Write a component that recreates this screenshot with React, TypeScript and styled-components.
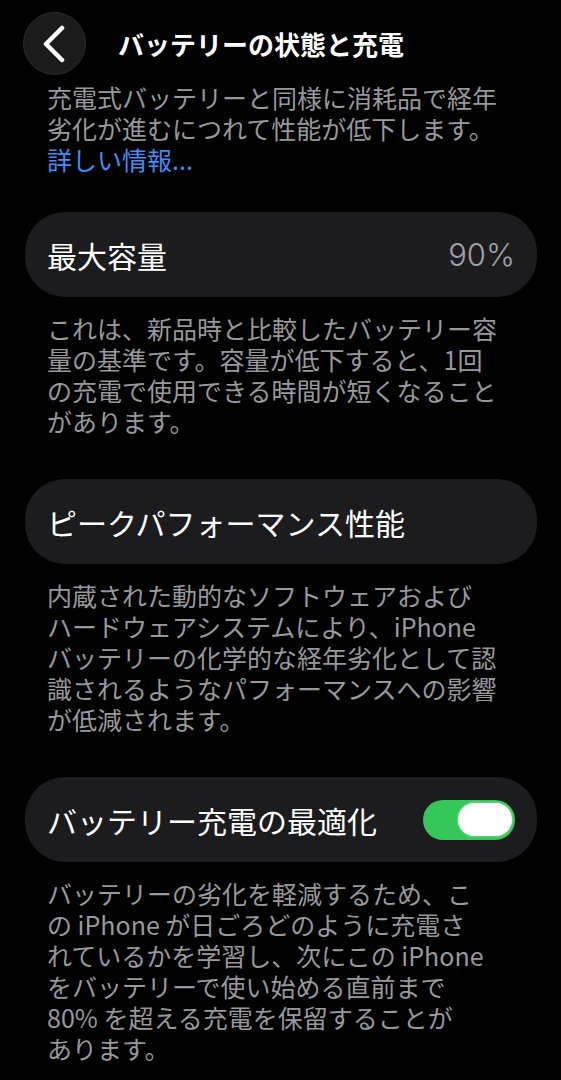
import React from 'react'
import styled, { createGlobalStyle } from 'styled-components'

const GlobalStyle = createGlobalStyle`
  html, body {
    margin: 0;
    padding: 0;
    background: #000;
  }
  body {
    font-family: "Noto Sans CJK JP", "Noto Sans", sans-serif;
    -webkit-font-smoothing: antialiased;
  }
`

const Page = styled.div`
  width: 561px;
  min-height: 1080px;
  background: #000;
  padding: 12px 24px 0 25px;
  box-sizing: border-box;
  overflow: hidden;
`

const Header = styled.header`
  display: flex;
  align-items: center;
  height: 63px;
  margin-left: -2px;
`

const BackButton = styled.button`
  width: 63px;
  height: 63px;
  border-radius: 50%;
  background: #1b1b1c;
  border: 1px solid #2a2a2c;
  box-sizing: border-box;
  display: flex;
  align-items: center;
  justify-content: center;
  padding: 0;
  flex-shrink: 0;
  svg {
    display: block;
    margin-left: -2px;
  }
`

const Title = styled.h1`
  margin: 0 0 0 32px;
  font-size: 26px;
  font-weight: 700;
  color: #fff;
  line-height: 1;
  letter-spacing: 0;
`

const Note = styled.p<{ $top: number }>`
  margin: ${(p) => p.$top}px 0 0 22px;
  font-size: 25px;
  line-height: 31px;
  color: #98989d;
  white-space: nowrap;
  span {
    display: block;
    height: 31px;
  }
`

const Link = styled.span`
  color: #3f8ef5;
`

const Card = styled.div<{ $top: number }>`
  margin-top: ${(p) => p.$top}px;
  height: 85px;
  border-radius: 40px;
  background: #1c1c1e;
  display: flex;
  align-items: center;
  justify-content: space-between;
  padding: 0 22px;
  box-sizing: border-box;
`

const Label = styled.span`
  font-size: 30px;
  color: #fff;
  line-height: 1;
`

const Value = styled.span`
  font-family: Inter, "Liberation Sans", sans-serif;
  font-size: 31px;
  font-weight: 300;
  color: #a0a0a5;
  line-height: 1;
`

const Toggle = styled.div<{ $on: boolean }>`
  width: 92px;
  height: 40px;
  border-radius: 20px;
  background: ${(p) => (p.$on ? '#34c759' : '#39393d')};
  display: flex;
  align-items: center;
  justify-content: ${(p) => (p.$on ? 'flex-end' : 'flex-start')};
  padding: 0 3px;
  box-sizing: border-box;
`

const Knob = styled.div`
  width: 54px;
  height: 33px;
  border-radius: 17px;
  background: #fff;
  box-shadow: 0 0 3px rgba(255, 255, 255, 0.6);
`

const Lines = ({ lines }: { lines: string[] }) => (
  <>
    {lines.map((l, i) => (
      <span key={i}>{l}</span>
    ))}
  </>
)

const capacityNote = [
  'これは、新品時と比較したバッテリー容',
  '量の基準です。容量が低下すると、1回',
  'の充電で使用できる時間が短くなること',
  'があります。',
]

const peakNote = [
  '内蔵された動的なソフトウェアおよび',
  'ハードウェアシステムにより、iPhone',
  'バッテリーの化学的な経年劣化として認',
  '識されるようなパフォーマンスへの影響',
  'が低減されます。',
]

const optimizeNote = [
  'バッテリーの劣化を軽減するため、こ',
  'の iPhone が日ごろどのように充電さ',
  'れているかを学習し、次にこの iPhone',
  'をバッテリーで使い始める直前まで',
  '80% を超える充電を保留することが',
  'あります。',
]

export default function App() {
  return (
    <>
      <GlobalStyle />
      <Page>
        <Header>
          <BackButton aria-label="戻る">
            <svg width="24" height="38" viewBox="0 0 24 38">
              <polyline
                points="20,3 4,19 20,35"
                fill="none"
                stroke="#fff"
                strokeWidth="4.5"
                strokeLinecap="round"
                strokeLinejoin="round"
              />
            </svg>
          </BackButton>
          <Title>バッテリーの状態と充電</Title>
        </Header>

        <Note $top={7}>
          <Lines lines={['充電式バッテリーと同様に消耗品で経年', '劣化が進むにつれて性能が低下します。']} />
          <Link>詳しい情報...</Link>
        </Note>

        <Card $top={37}>
          <Label>最大容量</Label>
          <Value>90%</Value>
        </Card>
        <Note $top={16}>
          <Lines lines={capacityNote} />
        </Note>

        <Card $top={42}>
          <Label>ピークパフォーマンス性能</Label>
        </Card>
        <Note $top={16}>
          <Lines lines={peakNote} />
        </Note>

        <Card $top={42}>
          <Label>バッテリー充電の最適化</Label>
          <Toggle $on>
            <Knob />
          </Toggle>
        </Card>
        <Note $top={16}>
          <Lines lines={optimizeNote} />
        </Note>
      </Page>
    </>
  )
}
